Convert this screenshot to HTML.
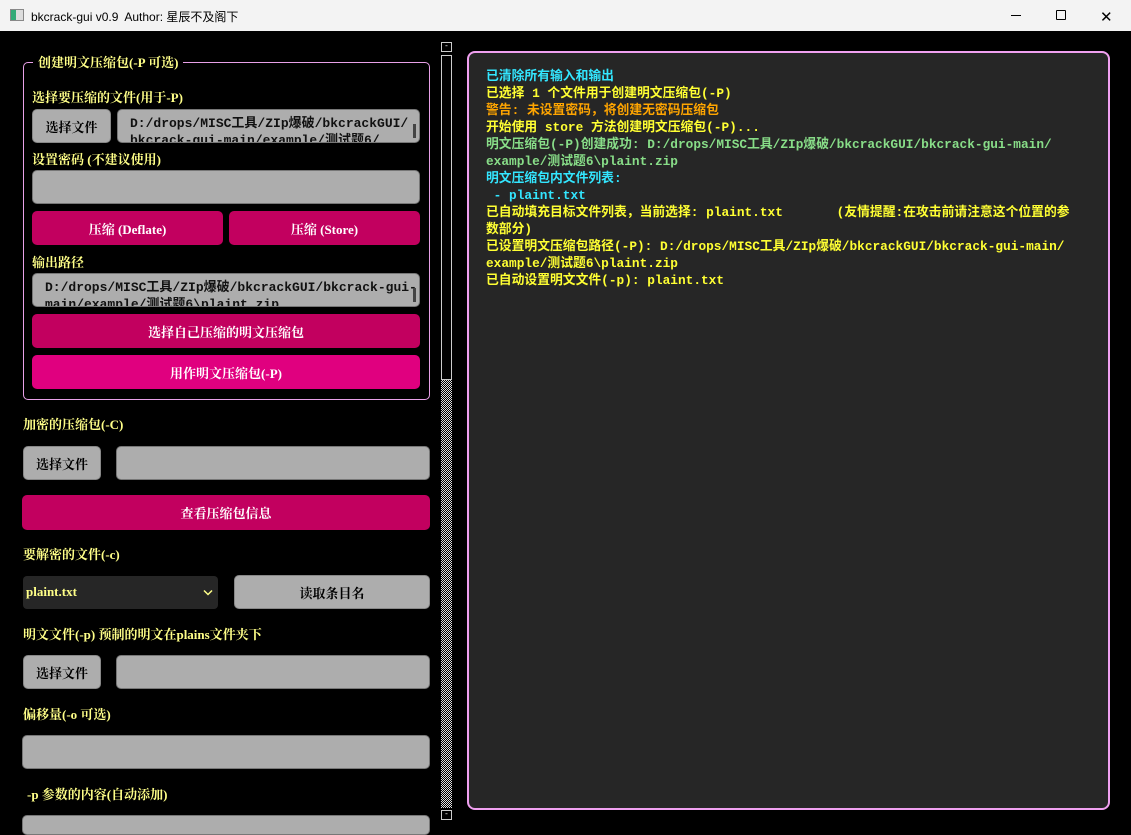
<!DOCTYPE html>
<html><head><meta charset="utf-8"><style>
*{margin:0;padding:0;box-sizing:border-box}
body{width:1131px;height:832px;background:#000;position:relative;overflow:hidden;font-family:"Liberation Serif","Noto Serif CJK SC",serif}
.a{position:absolute}
.tb{left:0;top:0;width:1131px;height:31px;background:#f3f3f3;font-family:"Liberation Sans","Noto Sans CJK SC",sans-serif;font-size:12px;color:#000}
.lbl{color:#ffff88;font-weight:bold;font-size:13px;white-space:nowrap}
.gray{background:#adadad;border-radius:5px;border:1px solid #777}
.btn{background:#adadad;border-radius:5px;color:#000;font-weight:bold;font-size:13px;display:flex;align-items:center;justify-content:center;border:1px solid #888}
.pk{background:#c2005f;border-radius:5px;color:#fff;font-weight:bold;font-size:13px;display:flex;align-items:center;justify-content:center}
.mono{font-family:"Liberation Mono","Noto Sans CJK SC",monospace;font-weight:bold}
.log{font-family:"Liberation Mono","Noto Sans CJK SC",monospace;font-weight:bold;font-size:12.8px;line-height:17px;white-space:pre}
.sb{position:absolute;right:3px;top:14px;width:3px;height:14px;background:#444}
</style></head><body>
<div class="a tb">
 <div class="a" style="left:10px;top:9px;width:14px;height:12px;border:1px solid #888;background:linear-gradient(90deg,#3a7 0 40%,#ddd 40%)"></div>
 <div class="a" style="left:31px;top:8px">bkcrack-gui v0.9&nbsp; Author: 星辰不及阁下</div>
 <div class="a" style="left:1011px;top:15px;width:10px;height:1px;background:#000"></div>
 <div class="a" style="left:1056px;top:10px;width:10px;height:10px;border:1px solid #000;border-radius:1px"></div>
 <div class="a" style="left:1100px;top:8px;font-size:15px">✕</div>
</div>

<div class="a" style="left:23px;top:62px;width:407px;height:338px;border:1px solid #e8a0e8;border-radius:5px"></div>
<div class="a lbl" style="left:33px;top:52px;background:#000;padding:0 5px">创建明文压缩包(-P 可选)</div>
<div class="a lbl" style="left:32px;top:87px">选择要压缩的文件(用于-P)</div>
<div class="a btn" style="left:32px;top:109px;width:79px;height:34px">选择文件</div>
<div class="a gray mono" style="left:117px;top:109px;width:303px;height:34px;font-size:13px;line-height:17px;padding:5px 12px;overflow:hidden;color:#111;white-space:nowrap">D:/drops/MISC工具/ZIp爆破/bkcrackGUI/<br>bkcrack-gui-main/example/测试题6/<div class="sb"></div></div>
<div class="a lbl" style="left:32px;top:149px">设置密码 (不建议使用)</div>
<div class="a gray" style="left:32px;top:170px;width:388px;height:34px"></div>
<div class="a pk" style="left:32px;top:211px;width:191px;height:34px">压缩 (Deflate)</div>
<div class="a pk" style="left:229px;top:211px;width:191px;height:34px">压缩 (Store)</div>
<div class="a lbl" style="left:32px;top:252px">输出路径</div>
<div class="a gray mono" style="left:32px;top:273px;width:388px;height:34px;font-size:13px;line-height:17px;padding:5px 12px;overflow:hidden;color:#111;white-space:nowrap">D:/drops/MISC工具/ZIp爆破/bkcrackGUI/bkcrack-gui-<br>main/example/测试题6\plaint.zip<div class="sb"></div></div>
<div class="a pk" style="left:32px;top:314px;width:388px;height:34px">选择自己压缩的明文压缩包</div>
<div class="a pk" style="left:32px;top:355px;width:388px;height:34px;background:#e0007f">用作明文压缩包(-P)</div>

<div class="a lbl" style="left:23px;top:414px">加密的压缩包(-C)</div>
<div class="a btn" style="left:23px;top:446px;width:78px;height:34px">选择文件</div>
<div class="a gray" style="left:116px;top:446px;width:314px;height:34px"></div>
<div class="a pk" style="left:22px;top:495px;width:408px;height:35px">查看压缩包信息</div>
<div class="a lbl" style="left:23px;top:544px">要解密的文件(-c)</div>
<div class="a" style="left:23px;top:576px;width:195px;height:33px;background:#262626;border-radius:4px;color:#ffff88;font-weight:bold;font-size:13px;padding:8px 3px">plaint.txt<svg class="a" style="right:5px;top:13px" width="10" height="7" viewBox="0 0 10 7"><path d="M1 1.5L5 5.5L9 1.5" stroke="#ffff88" stroke-width="1.5" fill="none"/></svg></div>
<div class="a btn" style="left:234px;top:575px;width:196px;height:34px">读取条目名</div>
<div class="a lbl" style="left:23px;top:624px">明文文件(-p) 预制的明文在plains文件夹下</div>
<div class="a btn" style="left:23px;top:655px;width:78px;height:34px">选择文件</div>
<div class="a gray" style="left:116px;top:655px;width:314px;height:34px"></div>
<div class="a lbl" style="left:23px;top:704px">偏移量(-o 可选)</div>
<div class="a gray" style="left:22px;top:735px;width:408px;height:34px"></div>
<div class="a lbl" style="left:27px;top:784px">-p 参数的内容(自动添加)</div>
<div class="a gray" style="left:22px;top:815px;width:408px;height:20px"></div>

<div class="a" style="left:441px;top:42px;width:11px;height:10px;border:1px solid #ccc;color:#fff;font-size:8px;line-height:6px;text-align:center">-</div>
<div class="a" style="left:441px;top:55px;width:11px;height:325px;border:1px solid #ccc"></div>
<div class="a" style="left:441px;top:380px;width:11px;height:428px;background:repeating-conic-gradient(#ddd 0 25%,#000 0 50%) 0 0/2px 2px"></div>
<div class="a" style="left:441px;top:810px;width:11px;height:10px;border:1px solid #ccc;color:#fff;font-size:8px;line-height:6px;text-align:center">-</div>

<div class="a" style="left:467px;top:51px;width:643px;height:759px;background:#262626;border:2px solid #f0a0f0;border-radius:8px"></div>
<div class="a log" style="left:486px;top:68px"><span style="color:#33e6ff">已清除所有输入和输出</span>
<span style="color:#ffff33">已选择 1 个文件用于创建明文压缩包(-P)</span>
<span style="color:#ffa500">警告: 未设置密码，将创建无密码压缩包</span>
<span style="color:#ffff33">开始使用 store 方法创建明文压缩包(-P)...</span>
<span style="color:#88dd88">明文压缩包(-P)创建成功: D:/drops/MISC工具/ZIp爆破/bkcrackGUI/bkcrack-gui-main/
example/测试题6\plaint.zip</span>
<span style="color:#33e6ff">明文压缩包内文件列表:
 - plaint.txt</span>
<span style="color:#ffff33">已自动填充目标文件列表，当前选择: plaint.txt       (友情提醒:在攻击前请注意这个位置的参
数部分)
已设置明文压缩包路径(-P): D:/drops/MISC工具/ZIp爆破/bkcrackGUI/bkcrack-gui-main/
example/测试题6\plaint.zip
已自动设置明文文件(-p): plaint.txt</span></div>
</body></html>
